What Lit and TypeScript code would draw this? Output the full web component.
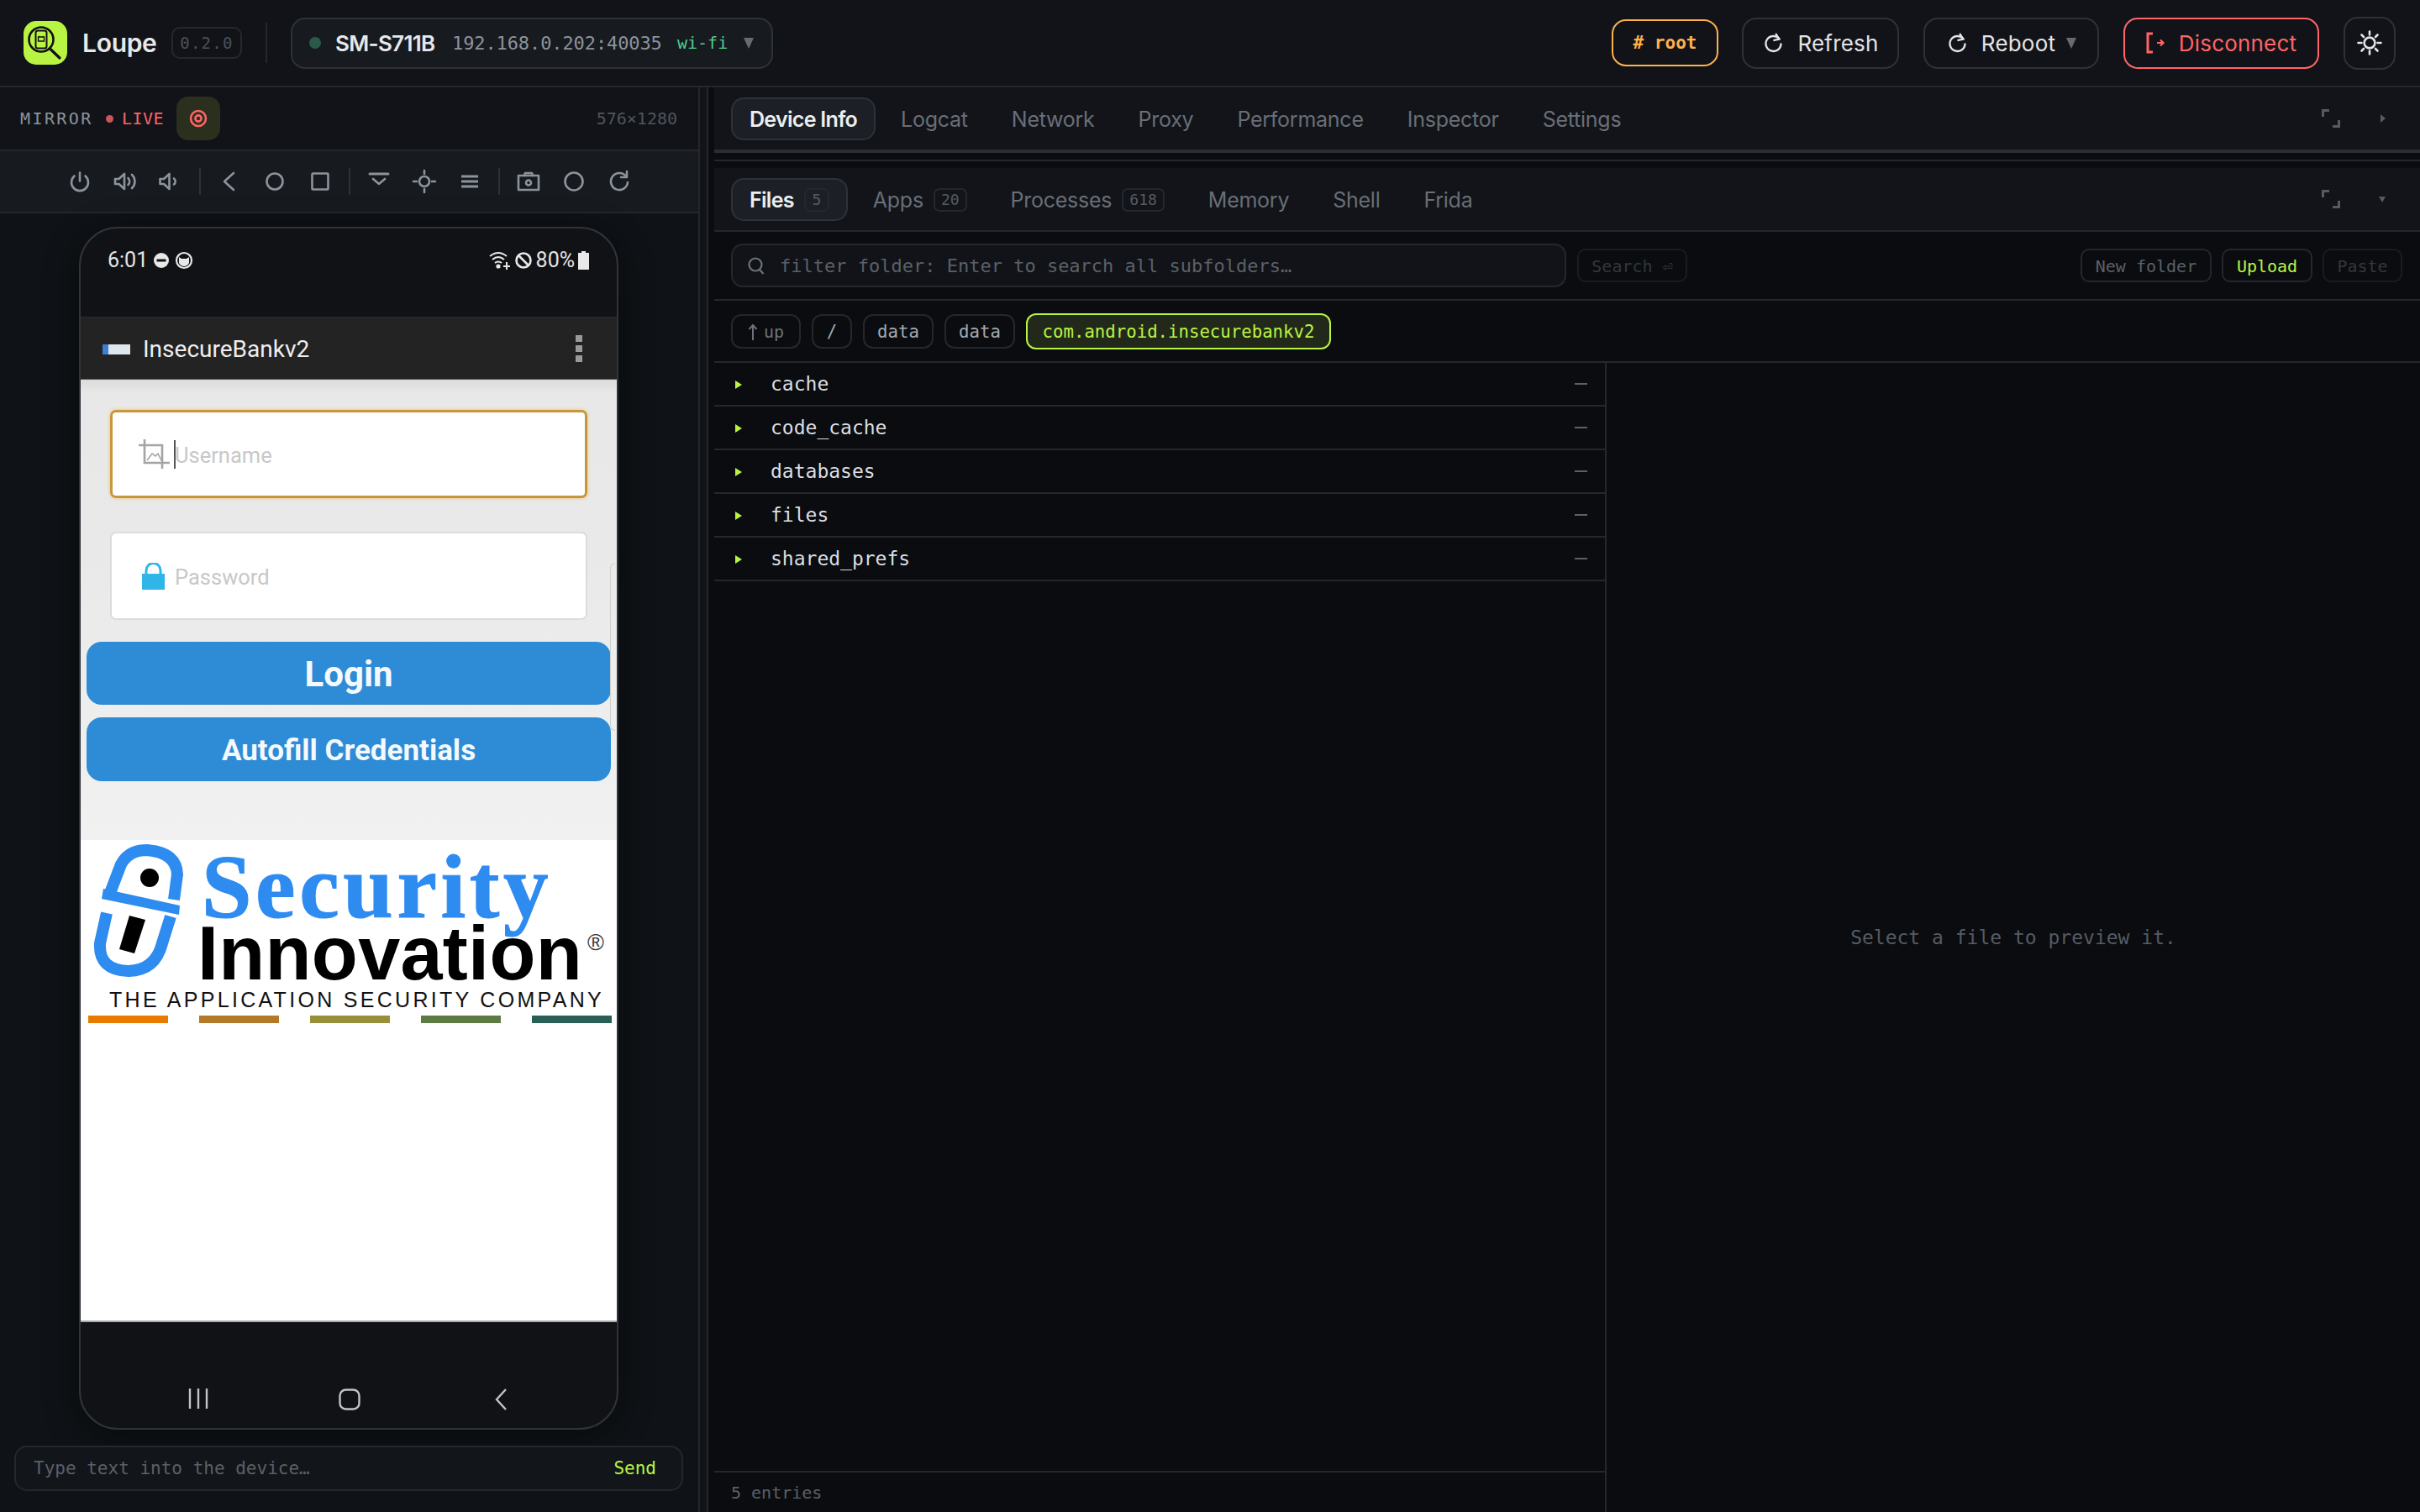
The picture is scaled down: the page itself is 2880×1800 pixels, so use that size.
import { LitElement, html, css, svg } from "lit";
import { customElement } from "lit/decorators.js";

const icon = (size: number, body: unknown, cls = "") =>
  html`<svg class=${cls} width=${size} height=${size} viewBox="0 0 30 30" fill="none" stroke="currentColor" stroke-width="2.6" stroke-linecap="round" stroke-linejoin="round">${body}</svg>`;

const refresh = svg`<path d="M23 9.500A10 10 0 1 0 25 16" /><path d="M18.500 3 22.500 9.500 16 11" />`;
const sun = svg`<circle cx="15" cy="15" r="6.400"/><path d="M15 1.500v4M15 24.500v4M1.500 15h4M24.500 15h4M5.500 5.500 8 8M22 22l2.500 2.500M5.500 24.500 8 22M22 8l2.500-2.500"/>`;
const tools: unknown[] = [
  svg`<path d="M15 4.500v10"/><path d="M8.500 8.500a10 10 0 1 0 13 0"/>`,
  svg`<path d="M3 12h4.500L14 6v18l-6.500-6H3z"/><path d="M18.500 11a5.500 5.500 0 0 1 0 8"/><path d="M23 7a11 11 0 0 1 0 16"/>`,
  svg`<path d="M2.500 12H7l6.500-6v18L7 18H2.500z"/><path d="M19 11.500a4.500 4.500 0 0 1 0 7"/>`,
  null,
  svg`<path d="M20 5 9 15l11 10"/>`,
  svg`<circle cx="15" cy="15" r="9.500"/>`,
  svg`<rect x="5.500" y="5.500" width="19" height="19" rx="1"/>`,
  null,
  svg`<path d="M4 6h22" stroke-width="3"/><path d="m8 12 7 6 7-6"/>`,
  svg`<circle cx="15" cy="15" r="6"/><path d="M15 2v4M15 24v4M2 15h4M24 15h4"/>`,
  svg`<path d="M5 9h20M5 15h20M5 21h20" stroke-width="3.200" stroke-linecap="butt"/>`,
  null,
  svg`<path d="M3 8h24v17H3z"/><path d="M10 8l1-3h8l1 3"/><circle cx="15" cy="16.500" r="3"/>`,
  svg`<circle cx="15" cy="15" r="10.500"/>`,
  svg`<path d="M23 9a10 10 0 1 0 2 7"/><path d="M24 3v7h-7"/>`,
];

const mainTabs = ["Logcat", "Network", "Proxy", "Performance", "Inspector", "Settings"];
const subTabs: [string, string?][] = [["Apps", "20"], ["Processes", "618"], ["Memory"], ["Shell"], ["Frida"]];
const crumbs = ["/", "data", "data"];
const folders = ["cache", "code_cache", "databases", "files", "shared_prefs"];
const bars = ["#e87a00", "#b07a28", "#97903a", "#5c7a42", "#2a5f56"];

const expand = html`<svg class="expand" width="22" height="22" viewBox="0 0 22 22" fill="none" stroke="#565b63" stroke-width="3"><path d="M1.500 9V1.500H9M20.500 13v7.500H13"/></svg>`;

@customElement("app-root")
export class AppRoot extends LitElement {
  static styles = css`
    :host { display: block; width: 2880px; height: 1800px; background: #0f1115; color: #e6e8eb; font-family: Inter, "Noto Sans", sans-serif; overflow: hidden; }
    * { box-sizing: border-box; }
    svg { display: block; flex: none; }
    .mono { font-family: "DejaVu Sans Mono", "Liberation Mono", monospace; }
    .top { height: 104px; border-bottom: 2px solid #24272d; background: #111318; display: flex; align-items: center; padding: 0 29px 0 28px; }
    .logo { width: 52px; height: 52px; border-radius: 15px; background: #b9f443; margin-right: 18px; }
    .brand { font-size: 30px; font-weight: 600; letter-spacing: -0.3px; width: 87px; margin-right: 19px; white-space: nowrap; }
    .ver { width: 84px; height: 38px; border: 2px solid #25282e; border-radius: 10px; color: #4c5159; font-size: 19px; display: flex; align-items: center; justify-content: center; letter-spacing: 1.3px; }
    .vsep { width: 2px; height: 48px; background: #24272d; margin: 0 28px; }
    .device { width: 574px; height: 61px; border: 2px solid #2d3138; border-radius: 17px; background: #171a1f; display: flex; align-items: center; padding-left: 20px; }
    .dot { width: 14px; height: 14px; border-radius: 50%; background: #2c5a4a; margin-right: 17px; }
    .model { font-size: 26px; font-weight: 600; width: 121px; margin-right: 18px; white-space: nowrap; letter-spacing: -0.7px; }
    .ip { font-size: 22px; color: #8d939b; width: 268px; white-space: nowrap; letter-spacing: -0.1px; }
    .wifi { font-size: 20px; color: #4fce8f; width: 79px; white-space: nowrap; }
    .caret { width: 0; height: 0; border-left: 6px solid transparent; border-right: 6px solid transparent; border-top: 13px solid #666b73; }
    .spacer { flex: 1; }
    .tbtn { height: 61px; border: 2px solid #2d3138; border-radius: 17px; display: flex; align-items: center; justify-content: center; gap: 15px; font-size: 26px; letter-spacing: 0.2px; color: #e2e4e7; margin-left: 29px; white-space: nowrap; }
    .root { width: 127px; height: 56px; margin-left: 0; border-color: #ffb14a; color: #ffb14a; font-size: 21px; font-weight: 700; letter-spacing: 0; }
    .refresh { width: 187px; margin-left: 28px; }
    .reboot { width: 209px; }
    .reboot .caret { margin-left: -2px; }
    .disc { width: 233px; border-color: #ff6466; color: #ff6466; }
    .theme { width: 62px; height: 63px; }
    .main { display: flex; height: 1696px; }
    .left { width: 833px; border-right: 2px solid #24272d; display: flex; flex-direction: column; }
    .split { width: 8px; background: #111318; }
    .right { width: 2039px; border-left: 2px solid #24272d; padding-left: 7px; background: #0a0c0f; display: flex; flex-direction: column; }
    .mhead { height: 76px; border-bottom: 2px solid #24272d; background: #111318; display: flex; align-items: center; padding: 0 25px 0 24px; font-size: 20px; }
    .mlabel { color: #8d939b; letter-spacing: 2.400px; width: 90px; margin-right: 12px; white-space: nowrap; }
    .ldot { width: 9px; height: 9px; border-radius: 50%; background: #c95757; margin-right: 10px; }
    .live { color: #ff6466; width: 65px; letter-spacing: 0.500px; }
    .rec { width: 52px; height: 52px; border-radius: 14px; background: #2a2f1e; color: #ff6466; display: flex; align-items: center; justify-content: center; }
    .size { color: #50555c; font-size: 20px; }
    .tools { height: 74px; border-bottom: 2px solid #24272d; background: #171a1f; display: flex; align-items: center; justify-content: center; color: #8c939c; }
    .tool { width: 54px; display: flex; justify-content: center; }
    .tsep { width: 2px; height: 32px; background: #2d3138; margin: 0 7px; }
    .mbody { flex: 1; background: #0f1216; display: flex; flex-direction: column; align-items: center; padding: 16px 1px 0 0; }
    .phone { width: 642px; height: 1432px; border: 2px solid #2e343c; border-radius: 46px; background: #101215; box-shadow: 0 8px 40px rgba(0,0,0,.45); overflow: hidden; display: flex; flex-direction: column; font-family: Roboto, sans-serif; }
    .status { height: 105px; display: flex; align-items: flex-start; padding: 22px 33px 0 32px; font-size: 25px; color: #e4e4e4; }
    .time { width: 55px; line-height: 32px; }
    .st-r { margin-left: auto; display: flex; align-items: center; gap: 4px; line-height: 32px; }
    .appbar { height: 75px; background: #232323; display: flex; align-items: center; padding: 2px 0 0 26px; color: #eee; font-size: 28px; border-top: 1px solid #2b2b2b; border-bottom: 1px solid #555; }
    .minilogo { width: 33px; height: 12px; background: linear-gradient(90deg, #3d7fd1 0 22%, #dfe6ee 22% 100%); margin-right: 15px; }
    .kebab { margin: -2px 41px 0 auto; display: flex; flex-direction: column; gap: 4px; }
    .kebab i { display: block; width: 8px; height: 8px; background: #9a9a9a; }
    .content { height: 548px; flex: none; background: linear-gradient(#dcdcdc 0, #e8e8e8 16px, #e9e9e9 200px, #f1f1f1 100%); padding: 36px 0 0 0; position: relative; }
    .field { margin-left: 35px; width: 568px; height: 105px; background: #fff; border-radius: 7px; border: 2px solid #dcdcdc; display: flex; align-items: center; padding: 2px 0 0 36px; font-size: 25.500px; color: #c8c8c8; }
    .field.focus { border: 3px solid #c8963c; box-shadow: 0 0 4px #e9c16f; padding: 2px 0 0 30px; }
    .field.pw { margin-top: 40px; }
    .crop { margin: -2px 5px 0 0; }
    .lock { margin: -2px 12px 0 0; }
    .caretline { width: 2px; height: 34px; background: #555; margin: -2px -1px 0 0; flex: none; }
    .scroll { position: absolute; right: 2px; top: 218px; width: 6px; height: 200px; border: 1px solid #cfcfcf; border-right: 0; border-radius: 6px 0 0 6px; }
    .pbtn { margin: 26px 0 0 7px; width: 624px; height: 75px; border-radius: 18px; background: #2e8bd6; color: #f5f9fc; display: flex; align-items: center; justify-content: center; padding-top: 2px; font-size: 42px; font-weight: 700; }
    .pbtn.auto { margin-top: 15px; height: 76px; font-size: 35px; }
    .white { flex: 1; background: #fff; padding-top: 5px; border-bottom: 2px solid #aaa; color: #000; }
    .lrow { display: flex; padding-left: 13px; height: 158px; }
    .ltext { margin-left: 21px; }
    .sec { font-family: "Liberation Serif", serif; font-weight: 700; font-size: 107px; line-height: 94px; color: #2e8bf0; letter-spacing: 4.600px; height: 98px; white-space: nowrap; -webkit-text-stroke: 1px #2e8bf0; padding-top: 4px; }
    .inn { font-family: "Liberation Sans", sans-serif; font-weight: 700; font-size: 90px; line-height: 65px; letter-spacing: 0.3px; white-space: nowrap; display: flex; align-items: flex-start; margin-left: -5px; }
    .reg { font-size: 27px; line-height: 38px; font-weight: 400; margin-left: 6px; color: #333; }
    .tag { font-family: "Liberation Sans", sans-serif; font-size: 25px; line-height: 25px; margin: 15px 0 0 34px; letter-spacing: 3.300px; color: #111; white-space: nowrap; }
    .stripes { display: flex; gap: 37px; margin: 6px 0 0 9px; }
    .stripes i { display: block; width: 95px; height: 9px; }
    .nav { height: 126px; flex: none; display: flex; align-items: flex-start; color: #c4c4c4; padding: 79px 0 0 128px; }
    .nav svg { margin-right: 153px; }
    .send { margin-top: 19px; width: 796px; height: 54px; flex: none; border: 2px solid #24272d; border-radius: 15px; background: #12151a; display: flex; align-items: center; padding: 0 30px 0 21px; font-size: 21px; color: #5b6068; }
    .send b { margin-left: auto; color: #b9f443; font-weight: 400; }
    .phead { background: #121419; display: flex; align-items: center; padding: 0 41px 0 20px; height: 74px; flex: none; }
    .phead.a { height: 78px; border-bottom: 4px solid #2a2d34; }
    .phead.b { height: 76px; border-bottom: 2px solid #24272d; }
    .gut { height: 18px; flex: none; display: flex; align-items: center; }
    .gut i { display: block; height: 2px; width: 100%; background: #24272d; }
    .tab { height: 51px; padding: 1px 20px 0; border: 2px solid transparent; border-radius: 15px; display: flex; align-items: center; font-size: 25px; letter-spacing: -0.25px; color: #696e77; margin-right: 8px; white-space: nowrap; }
    .tab.on { background: #1c2026; border-color: #2d3238; color: #eceef0; font-weight: 600; letter-spacing: -0.7px; }
    .count { height: 28px; min-width: 30px; padding: 0 7px; border: 2px solid #24272d; border-radius: 7px; margin-left: 12px; font-size: 18px; letter-spacing: 0; color: #565b63; font-weight: 400; display: flex; align-items: center; justify-content: center; }
    .expand { margin-left: auto; }
    .tri { margin-left: 48px; width: 0; height: 0; }
    .tri.r { border-top: 5px solid transparent; border-bottom: 5px solid transparent; border-left: 6px solid #565b63; }
    .tri.d { border-left: 4px solid transparent; border-right: 4px solid transparent; border-top: 7px solid #565b63; margin-left: 46px; }
    .filter { height: 82px; flex: none; border-bottom: 2px solid #24272d; display: flex; align-items: center; padding: 0 21px 0 20px; }
    .finput { width: 994px; height: 52px; border: 2px solid #24272d; border-radius: 14px; background: #111318; display: flex; align-items: center; padding: 1px 0 0 18px; font-size: 22px; color: #5b6068; gap: 18px; }
    .sbtn { height: 40px; border: 2px solid #24272d; border-radius: 10px; display: flex; align-items: center; justify-content: center; padding-top: 1px; font-size: 20px; color: #5b6068; white-space: nowrap; }
    .srch { width: 131px; margin-left: 13px; border-color: #191c20; color: #33373d; }
    .nf { width: 156px; margin-left: auto; }
    .up { width: 108px; margin-left: 12px; color: #b9f443; }
    .pst { width: 95px; margin-left: 12px; border-color: #191c20; color: #33373d; }
    .crumbs { height: 74px; flex: none; border-bottom: 2px solid #24272d; display: flex; align-items: center; padding-left: 20px; gap: 13px; font-size: 20.700px; }
    .crumb { height: 41px; width: 84px; padding-top: 1px; border: 2px solid #24272d; border-radius: 12px; color: #a4a9b0; display: flex; align-items: center; justify-content: center; }
    .crumb.upc { width: 83px; color: #6d727a; font-size: 20px; gap: 7px; }
    .crumb.slash { width: 48px; }
    .crumb.cur { height: 43px; width: 363px; border-color: #b9f443; background: #23291a; color: #b9f443; white-space: nowrap; }
    .fbody { flex: 1; display: flex; min-height: 0; }
    .flist { width: 1062px; border-right: 2px solid #24272d; display: flex; flex-direction: column; }
    .row { height: 52px; flex: none; border-bottom: 2px solid #24272d; display: flex; align-items: center; padding: 0 21px 0 25px; font-size: 23px; color: #dcdee1; }
    .arrow { width: 0; height: 0; border-top: 5px solid transparent; border-bottom: 5px solid transparent; border-left: 8px solid #b9f443; margin: 2px 34px 0 0; }
    .dash { margin-left: auto; width: 15px; height: 2px; background: #5b6068; }
    .foot { margin-top: auto; height: 49px; border-top: 2px solid #24272d; display: flex; align-items: center; padding-left: 20px; font-size: 20px; color: #5b6068; }
    .preview { flex: 1; display: flex; align-items: center; justify-content: center; font-size: 23px; color: #565b63; }
  `;

  render() {
    return html`
      <div class="top">
        <svg class="logo" viewBox="0 0 52 52" fill="none" stroke="#101114">
          <circle cx="21" cy="22" r="14.500" stroke-width="2.600"/>
          <path d="M31.500 33 43 44" stroke-width="3.200" stroke-linecap="round"/>
          <rect x="14.500" y="11.500" width="13" height="21" rx="2.500" stroke-width="2"/>
          <path d="M17.500 19v5h7v-5zM18.500 18l1 1.500M23.500 18l-1 1.500" stroke-width="1.400"/>
        </svg>
        <div class="brand">Loupe</div>
        <div class="ver mono">0.2.0</div>
        <div class="vsep"></div>
        <div class="device">
          <span class="dot"></span>
          <span class="model">SM-S711B</span>
          <span class="ip mono">192.168.0.202:40035</span>
          <span class="wifi mono">wi-fi</span>
          <span class="caret"></span>
        </div>
        <div class="spacer"></div>
        <div class="tbtn root mono"># root</div>
        <div class="tbtn refresh">${icon(27, refresh)}Refresh</div>
        <div class="tbtn reboot">${icon(27, refresh)}Reboot<span class="caret"></span></div>
        <div class="tbtn disc">
          <svg width="24" height="26" viewBox="0 0 24 26" fill="none" stroke="currentColor" stroke-width="3"><path d="M8 2H2v22h6"/><path d="M13 13h7M17 9.500l3.500 3.500-3.500 3.500" stroke-width="2.200"/></svg>
          Disconnect
        </div>
        <div class="tbtn theme">${icon(30, sun)}</div>
      </div>
      <div class="main">
        <div class="left">
          <div class="mhead mono">
            <span class="mlabel">MIRROR</span><span class="ldot"></span><span class="live">LIVE</span>
            <span class="rec"><svg width="22" height="22" viewBox="0 0 22 22" fill="none" stroke="currentColor" stroke-width="2.600"><circle cx="11" cy="11" r="9"/><circle cx="11" cy="11" r="3.600"/></svg></span>
            <span class="spacer"></span><span class="size">576×1280</span>
          </div>
          <div class="tools">
            ${tools.map((t) => (t ? html`<span class="tool">${icon(30, t)}</span>` : html`<span class="tsep"></span>`))}
          </div>
          <div class="mbody">
            <div class="phone">
              <div class="status">
                <span class="time">6:01</span>
                <svg width="50" height="32" viewBox="0 0 50 32"><circle cx="9" cy="16" r="9" fill="#e8e8e8"/><rect x="3.500" y="14.500" width="11" height="3" fill="#111"/><circle cx="36" cy="16" r="9" fill="none" stroke="#e8e8e8" stroke-width="2.200"/><path d="M30 12l3 2h6l3-2v7q-2 4-6 4t-6-4z" fill="#e8e8e8"/></svg>
                <span class="st-r">
                  <svg width="26" height="26" viewBox="0 0 26 26" fill="none" stroke="#e8e8e8" stroke-width="2"><path d="M1 8q10-8 20 0M4 12q7-6 14 0M7 16q4-3 8 0"/><circle cx="11" cy="20" r="1.600" fill="#e8e8e8"/><path d="M21 15v9M17 20h8"/></svg>
                  <svg width="22" height="24" viewBox="0 0 22 24" fill="none" stroke="#e8e8e8" stroke-width="2.600"><circle cx="11" cy="12" r="8.500"/><path d="M5 6l12 12"/></svg>
                  <span>80%</span>
                  <svg width="13" height="22" viewBox="0 0 13 22"><path d="M4 0h5v2h4v20H0V2h4z" fill="#e8e8e8"/></svg>
                </span>
              </div>
              <div class="appbar">
                <span class="minilogo"></span>InsecureBankv2
                <span class="kebab"><i></i><i></i><i></i></span>
              </div>
              <div class="content">
                <div class="field focus">
                  <svg class="crop" width="38" height="36" viewBox="0 0 38 36" fill="none" stroke="#a4a4a4" stroke-width="2.600"><path d="M1 7h28v28M8 0v28h30"/><path d="M11 25l6-8 4 3 3-3 4 8" stroke-width="1.600"/></svg>
                  <span class="caretline"></span>Username
                </div>
                <div class="field pw">
                  <svg class="lock" width="27" height="32" viewBox="0 0 27 32" fill="none"><path d="M5 14V9a8.500 8.500 0 0 1 17 0v5" stroke="#2fb5e8" stroke-width="3"/><rect x="0" y="13" width="27" height="19" fill="#2fb5e8"/></svg>
                  Password
                </div>
                <div class="scroll"></div>
                <div class="pbtn">Login</div>
                <div class="pbtn auto">Autofill Credentials</div>
              </div>
              <div class="white">
                <div class="lrow">
                  <svg width="110" height="158" viewBox="0 0 110 158" fill="none" stroke="#2e8bf0" stroke-width="14">
                    <path d="M22 58 35 24Q44 7 66 7 101 10 102 36L98 66"/>
                    <path d="M18 82 10 118Q8 150 44 151 76 150 84 118L94 86"/>
                    <path d="M14 53 105 73 104 84 12 65Z" fill="#2e8bf0" stroke="none"/>
                    <circle cx="69" cy="40" r="11" fill="#000" stroke="none"/>
                    <path d="M45 85 64 90 51 130 33 125Z" fill="#000" stroke="none"/>
                  </svg>
                  <div class="ltext">
                    <div class="sec">Security</div>
                    <div class="inn">Innovation<span class="reg">®</span></div>
                  </div>
                </div>
                <div class="tag">THE APPLICATION SECURITY COMPANY</div>
                <div class="stripes">${bars.map((c) => html`<i style="background:${c}"></i>`)}</div>
              </div>
              <div class="nav">
                <svg width="24" height="24" viewBox="0 0 24 24" fill="none" stroke="currentColor" stroke-width="2.400"><path d="M2 0v24M12 0v24M22 0v24"/></svg>
                <svg style="margin-left:2px;margin-right:159px" width="26" height="26" viewBox="0 0 26 26" fill="none" stroke="currentColor" stroke-width="2.400"><rect x="1.500" y="1.500" width="23" height="23" rx="7"/></svg>
                <svg width="16" height="26" viewBox="0 0 16 26" fill="none" stroke="currentColor" stroke-width="2.400"><path d="M14 1 3 13l11 12"/></svg>
              </div>
            </div>
            <div class="send mono"><span>Type text into the device…</span><b>Send</b></div>
          </div>
        </div>
        <div class="split"></div>
        <div class="right">
          <div class="phead a">
            <div class="tab on">Device Info</div>
            ${mainTabs.map((t) => html`<div class="tab">${t}</div>`)}
            ${expand}<span class="tri r"></span>
          </div>
          <div class="gut"><i></i></div>
          <div class="phead b">
            <div class="tab on">Files<span class="count mono">5</span></div>
            ${subTabs.map(([t, c]) => html`<div class="tab">${t}${c ? html`<span class="count mono">${c}</span>` : ""}</div>`)}
            ${expand}<span class="tri d"></span>
          </div>
          <div class="filter mono">
            <div class="finput">
              <svg width="20" height="24" viewBox="0 0 20 24" fill="none" stroke="#6d727a" stroke-width="2.200"><circle cx="9" cy="10" r="7.500"/><path d="m14 16 4.500 5"/></svg>
              <span>filter folder: Enter to search all subfolders…</span>
            </div>
            <div class="sbtn srch">Search ⏎</div>
            <div class="sbtn nf">New folder</div>
            <div class="sbtn up">Upload</div>
            <div class="sbtn pst">Paste</div>
          </div>
          <div class="crumbs mono">
            <div class="crumb upc"><svg width="12" height="20" viewBox="0 0 12 20" fill="none" stroke="currentColor" stroke-width="2"><path d="M6 20V2M1.500 7 6 2l4.500 5"/></svg>up</div>
            ${crumbs.map((c) => html`<div class="crumb ${c === "/" ? "slash" : ""}">${c}</div>`)}
            <div class="crumb cur">com.android.insecurebankv2</div>
          </div>
          <div class="fbody mono">
            <div class="flist">
              ${folders.map((f) => html`<div class="row"><span class="arrow"></span>${f}<span class="dash"></span></div>`)}
              <div class="foot">5 entries</div>
            </div>
            <div class="preview">Select a file to preview it.</div>
          </div>
        </div>
      </div>
    `;
  }
}
